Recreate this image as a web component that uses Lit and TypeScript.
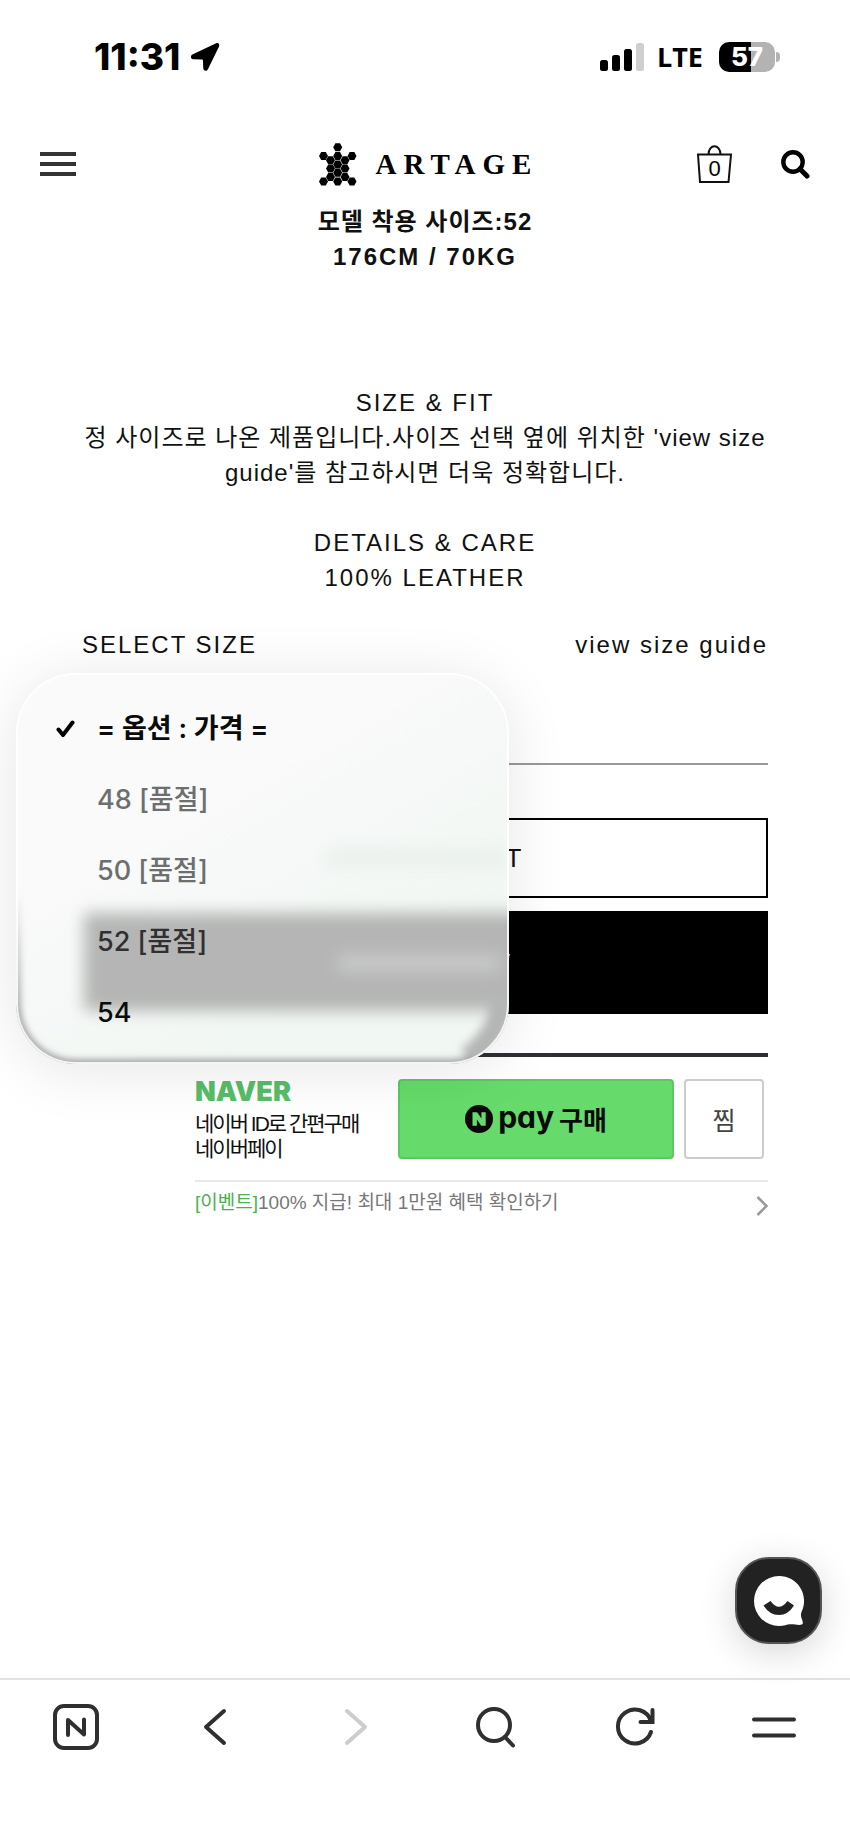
import { LitElement, html, css, svg, nothing } from "lit";
import { customElement, state } from "lit/decorators.js";

interface SizeOption {
  label: string;
  soldOut: boolean;
}

const OPTIONS: SizeOption[] = [
  { label: "= 옵션 : 가격 =", soldOut: false },
  { label: "48 [품절]", soldOut: true },
  { label: "50 [품절]", soldOut: true },
  { label: "52 [품절]", soldOut: true },
  { label: "54", soldOut: false },
];

// Centres of the hexagon cells that make up the turtle mark.
const CELLS: [number, number][] = [
  [18.7, 4.3],
  [4.5, 13], [18.7, 13], [33, 13],
  [11.5, 17.2], [26, 17.2],
  [18.7, 21.4],
  [11.5, 25.6], [26, 25.6],
  [18.7, 29.8],
  [11.5, 34], [26, 34],
  [4.5, 38.4], [18.7, 38.4], [33, 38.4],
];

const hexagon = ([x, y]: [number, number]) =>
  svg`<path d="M${x - 4.5} ${y}l2.2-4h4.600l2.200 4l-2.200 4h-4.600z" />`;

@customElement("status-bar")
export class StatusBar extends LitElement {
  static styles = css`
    :host {
      display: flex;
      align-items: center;
      justify-content: space-between;
      height: 114px;
      padding: 0 70px 0 94px;
      box-sizing: border-box;
      font-family: Inter, "Noto Sans CJK KR", sans-serif;
      color: #000;
    }
    .side {
      display: flex;
      align-items: center;
    }
    .time {
      font-size: 37px;
      line-height: 40px;
      font-weight: 800;
      margin-right: 10px;
    }
    .network {
      font: 700 27px/32px "Open Sans", sans-serif;
      margin: 0 16px 0 13px;
    }
    .battery {
      position: relative;
      display: flex;
      align-items: center;
    }
    .cell {
      width: 56px;
      height: 30px;
      border-radius: 10px;
      background: linear-gradient(90deg, #000 57%, #b3b3b3 57%);
      color: #fff;
      font-size: 26px;
      line-height: 30px;
      font-weight: 800;
      text-align: center;
    }
    .nub {
      width: 4px;
      height: 10px;
      margin-left: 1px;
      border-radius: 0 4px 4px 0;
      background: #b3b3b3;
    }
    svg {
      display: block;
    }
  `;

  render() {
    return html`
      <div class="side">
        <span class="time">11:31</span>
        <svg width="30" height="30" viewBox="0 0 31 30" aria-hidden="true">
          <path
            d="M27 .8L2.400 12.400C.2 13.600.6 17 3.200 17.200L12.500 17.600Q13.400 17.700 13.400 18.600L13.700 26.700C13.800 29.600 17.200 30.100 18.400 27.800L30 4.200C31 1.800 29.200-.1 27 .8z"
          />
        </svg>
      </div>
      <div class="side">
        <svg width="44" height="28" viewBox="0 0 44 28" aria-hidden="true">
          <rect x="0" y="17" width="8" height="11" rx="2.500" />
          <rect x="12" y="12" width="8" height="16" rx="2.500" />
          <rect x="24" y="6" width="8" height="22" rx="2.500" />
          <rect x="36" y="0" width="8" height="28" rx="2.500" fill="#cfcfcf" />
        </svg>
        <span class="network">LTE</span>
        <span class="battery"
          ><span class="cell">57</span><span class="nub"></span
        ></span>
      </div>
    `;
  }
}

@customElement("shop-header")
export class ShopHeader extends LitElement {
  static styles = css`
    :host {
      display: grid;
      grid-template-columns: 1fr auto 1fr;
      align-items: center;
      height: 90px;
      padding: 10px 40px 0;
      box-sizing: border-box;
    }
    button,
    a {
      display: block;
      padding: 0;
      border: 0;
      background: none;
      color: #000;
      text-decoration: none;
      cursor: pointer;
    }
    .brand {
      display: flex;
      align-items: center;
      gap: 19px;
    }
    .name {
      font: 700 29px/32px "Liberation Serif", serif;
      letter-spacing: 7px;
      margin-right: -7px;
    }
    .tools {
      display: flex;
      align-items: center;
      justify-content: flex-end;
      gap: 49px;
    }
    .bag {
      position: relative;
    }
    .count {
      position: absolute;
      inset: 11px 0 0;
      font: 400 22px/26px "Liberation Sans", sans-serif;
      text-align: center;
    }
    svg {
      display: block;
    }
  `;

  render() {
    return html`
      <button aria-label="메뉴">
        <svg width="36" height="26" viewBox="0 0 36 26" fill="#333">
          <path d="M0 1h36v4H0zM0 11h36v4H0zM0 21h36v4H0z" />
        </svg>
      </button>
      <a class="brand" href="#">
        <svg width="38" height="43" viewBox="0 0 38 43" aria-hidden="true">
          ${CELLS.map(hexagon)}
        </svg>
        <span class="name">ARTAGE</span>
      </a>
      <div class="tools">
        <a class="bag" href="#cart" aria-label="장바구니">
          <svg width="35" height="38" viewBox="0 0 35 38" fill="none" stroke="#111" stroke-width="2">
            <path d="M1 9.500h33l-2.500 27.500h-28.500z" />
            <path d="M11.500 9.500c0-11 12-11 12 0" />
          </svg>
          <span class="count">0</span>
        </a>
        <button aria-label="검색">
          <svg width="29" height="29" viewBox="0 0 29 29" fill="none" stroke="#000">
            <circle cx="12" cy="12" r="9.700" stroke-width="4.400" />
            <path d="M19 19l7 7" stroke-width="5" stroke-linecap="round" />
          </svg>
        </button>
      </div>
    `;
  }
}

@customElement("size-picker")
export class SizePicker extends LitElement {
  @state() private selected = 0;
  @state() private open = true;

  static styles = css`
    :host {
      display: block;
      position: relative;
    }
    .field {
      display: block;
      width: 100%;
      height: 92px;
      padding: 0 10px;
      border: 0;
      border-bottom: 2px solid #999;
      border-radius: 0;
      background: transparent;
      color: #555;
      appearance: none;
      font: 400 24px/32px "Liberation Sans", "Noto Sans CJK KR", sans-serif;
    }
    .popup {
      position: absolute;
      z-index: 2;
      top: 0;
      left: -66px;
      width: 493px;
      padding: 20px 0 16px;
      box-sizing: border-box;
      border-radius: 60px;
      overflow: hidden;
      background: linear-gradient(150deg, #fafafa 30%, #f1f7f3 75%);
    }
    .halo {
      position: absolute;
      top: 0;
      left: -66px;
      width: 493px;
      height: 391px;
      border-radius: 60px;
      box-shadow: 0 6px 60px rgba(0, 0, 0, 0.1);
    }
    .rim {
      position: absolute;
      inset: 0;
      width: 100%;
      height: 100%;
      pointer-events: none;
    }
    .option {
      position: relative;
      display: grid;
      grid-template-columns: 19px 1fr;
      column-gap: 22px;
      align-items: center;
      width: 100%;
      height: 71px;
      padding: 0 40px;
      border: 0;
      background: none;
      color: #0b0b0b;
      text-align: left;
      font: 500 27px/36px Inter, "Noto Sans CJK KR", sans-serif;
    }
    .option:disabled {
      color: #6d6f6e;
    }
    .option.shaded:disabled {
      color: #303030;
    }
    .option.chosen {
      font-weight: 600;
    }
    .label {
      grid-column: 2;
    }
    svg {
      display: block;
    }
  `;

  private pick(index: number) {
    this.selected = index;
    this.open = false;
  }

  render() {
    return html`
      <select
        class="field"
        id="size"
        aria-label="SELECT SIZE"
        @mousedown=${(e: Event) => {
          e.preventDefault();
          this.open = !this.open;
        }}
      >
        ${OPTIONS.map(
          (o, i) =>
            html`<option ?disabled=${o.soldOut} ?selected=${i === this.selected}>
              ${o.label}
            </option>`
        )}
      </select>
      ${this.open ? this.renderPopup() : nothing}
    `;
  }

  private renderPopup() {
    return html`
      <div class="halo"></div>
      <div class="popup" role="listbox" aria-label="SELECT SIZE">
        <svg class="rim" viewBox="0 0 493 391" fill="none" aria-hidden="true">
          <defs>
            <filter id="glass" x="-20%" y="-100%" width="140%" height="300%">
              <feGaussianBlur stdDeviation="8" />
            </filter>
            <filter id="soft" x="-50%" y="-20%" width="200%" height="140%">
              <feGaussianBlur stdDeviation="5" />
            </filter>
            <filter id="fine" x="-20%" y="-20%" width="140%" height="140%">
              <feGaussianBlur stdDeviation="3" />
            </filter>
            <linearGradient id="fade" x1="0" y1="220" x2="0" y2="340" gradientUnits="userSpaceOnUse">
              <stop offset="0" stop-color="#9a9a9a" stop-opacity="0" />
              <stop offset="1" stop-color="#9a9a9a" stop-opacity=".85" />
            </linearGradient>
          </defs>
          <g filter="url(#glass)">
            <rect x="310" y="176" width="180" height="18" fill="#eaf0ec" />
          </g>
          <g filter="url(#glass)">
            <rect x="68" y="240" width="460" height="98" fill="#b4b5b4" />
          </g>
          <g filter="url(#glass)">
            <rect x="322" y="282" width="162" height="16" fill="#c9cbca" />
          </g>
          <path
            d="M486 325C486 350 474 370 452 386"
            stroke="#b4b6b5" stroke-width="24" filter="url(#soft)"
          />
          <path
            d="M0 225V331A60 60 0 0 0 60 391H433Q446 391 458 386"
            stroke="url(#fade)" stroke-width="10" filter="url(#fine)"
          />
          <rect x="1" y="1" width="491" height="389" rx="59" stroke="#fff" stroke-opacity=".85" stroke-width="2" />
        </svg>
        ${OPTIONS.map(
          (o, i) => html`<button
            class="option ${i === this.selected ? "chosen" : ""} ${i === 3 ? "shaded" : ""}"
            role="option"
            aria-selected=${i === this.selected}
            ?disabled=${o.soldOut}
            @click=${() => this.pick(i)}
          >
            ${i === this.selected
              ? html`<svg width="19" height="18" viewBox="0 0 19 18" fill="none" stroke="#000" stroke-width="4" stroke-linecap="round" stroke-linejoin="round" aria-hidden="true">
                  <path d="M2.500 9.500l4.500 5.500l9.500-12.500" />
                </svg>`
              : nothing}
            <span class="label">${o.label}</span>
          </button>`
        )}
      </div>
    `;
  }
}

@customElement("naver-pay")
export class NaverPay extends LitElement {
  static styles = css`
    :host {
      display: block;
      margin: 39px 0 0 113px;
      border-top: 4px solid #2e3036;
      font-family: "Liberation Sans", "Noto Sans CJK KR", sans-serif;
    }
    .row {
      display: grid;
      grid-template-columns: 1fr 276px 80px;
      column-gap: 10px;
      padding: 22px 4px 21px 0;
      border-bottom: 2px solid #e9e9e9;
    }
    .about {
      height: 80px;
      white-space: nowrap;
      font-size: 21px;
      line-height: 25px;
      letter-spacing: -2px;
      color: #111;
    }
    .logo {
      display: block;
      margin-bottom: 6px;
      font: 900 27px/26px Inter, sans-serif;
      letter-spacing: normal;
      color: #58bd68;
    }
    .line {
      display: block;
    }
    button {
      height: 80px;
      padding: 0;
      border-radius: 4px;
      font-family: inherit;
      cursor: pointer;
    }
    .buy {
      display: flex;
      align-items: center;
      justify-content: center;
      border: 2px solid #5cc763;
      background: #66db6b;
      color: #0a0a0a;
    }
    .pay {
      margin: 0 5px 4px 5px;
      font: 700 30px/36px Inter, sans-serif;
      font-feature-settings: "cv11";
    }
    .verb {
      font: 700 26px/36px "Noto Sans CJK KR", sans-serif;
    }
    .wish {
      border: 2px solid #ccc;
      background: #fff;
      color: #444;
      font-size: 25px;
    }
    .event {
      display: flex;
      align-items: center;
      justify-content: space-between;
      height: 42px;
      font-size: 19px;
      line-height: 28px;
      color: #777;
      text-decoration: none;
    }
    .tag {
      color: #4bb050;
    }
    .chevron {
      margin-top: 6px;
    }
    svg {
      display: block;
    }
  `;

  render() {
    return html`
      <div class="row">
        <div class="about">
          <span class="logo">NAVER</span>
          <span class="line">네이버 ID로 간편구매</span>
          <span class="line">네이버페이</span>
        </div>
        <button class="buy">
          <svg width="28" height="28" viewBox="0 0 28 28" aria-hidden="true">
            <circle cx="14" cy="14" r="14" fill="#0a0a0a" />
            <path d="M7.500 7.200h4.600l4.300 6.200V7.200h4.300v13.600h-4.500l-4.300-6.200v6.200H7.500z" fill="#66db6b" />
          </svg>
          <span class="pay">pay</span>
          <span class="verb">구매</span>
        </button>
        <button class="wish">찜</button>
      </div>
      <a class="event" href="#event">
        <span><span class="tag">[이벤트]</span>100% 지급! 최대 1만원 혜택 확인하기</span>
        <svg class="chevron" width="12" height="20" viewBox="0 0 12 20" fill="none" stroke="#999" stroke-width="2.500" aria-hidden="true">
          <path d="M1.500 1l9 9l-9 9" />
        </svg>
      </a>
    `;
  }
}

@customElement("browser-bar")
export class BrowserBar extends LitElement {
  static styles = css`
    :host {
      display: flex;
      height: 164px;
      padding: 0 6px;
      box-sizing: border-box;
      border-top: 2px solid #e2e2e2;
      background: #fff;
    }
    button {
      flex: 1;
      display: flex;
      justify-content: center;
      height: 94px;
      padding: 0;
      border: 0;
      background: none;
      align-items: center;
    }
    svg {
      display: block;
      fill: none;
      stroke: #2f2f2f;
      stroke-width: 4px;
      stroke-linecap: round;
      stroke-linejoin: round;
    }
    button:disabled svg {
      stroke: #ccc;
    }
  `;

  render() {
    return html`
      <button aria-label="네이버 홈">
        <svg width="46" height="46" viewBox="0 0 46 46">
          <rect x="2" y="2" width="42" height="42" rx="9" />
          <path d="M15 31V16L31 30.500V15.500" />
        </svg>
      </button>
      <button aria-label="뒤로">
        <svg width="46" height="46" viewBox="0 0 46 46"><path d="M31 7L13 23L31 39" /></svg>
      </button>
      <button aria-label="앞으로" disabled>
        <svg width="46" height="46" viewBox="0 0 46 46"><path d="M15 7L33 23L15 39" /></svg>
      </button>
      <button aria-label="검색">
        <svg width="46" height="46" viewBox="0 0 46 46">
          <circle cx="22" cy="21" r="16" />
          <path d="M33 33L41 41.500" />
        </svg>
      </button>
      <button aria-label="새로고침">
        <svg width="46" height="46" viewBox="0 0 46 46">
          <path d="M39 28A17 17 0 1 1 39 17" />
          <path d="M40.500 6V18H28.500" stroke-linejoin="miter" />
        </svg>
      </button>
      <button aria-label="메뉴">
        <svg width="46" height="46" viewBox="0 0 46 46"><path d="M3 15.500H43M3 31.500H43" /></svg>
      </button>
    `;
  }
}

@customElement("app-root")
export class AppRoot extends LitElement {
  static styles = css`
    :host {
      display: flex;
      flex-direction: column;
      min-height: 100vh;
      position: relative;
      background: #fff;
      color: #111;
      font-family: "Liberation Sans", "Noto Sans CJK KR", sans-serif;
      font-size: 24px;
      line-height: 35px;
      letter-spacing: 2px;
    }
    status-bar,
    shop-header,
    size-picker,
    naver-pay {
      letter-spacing: normal;
    }
    main {
      flex: 1;
      padding: 0 82px;
    }
    p {
      margin: 0;
      text-align: center;
      word-break: keep-all;
    }
    .korean {
      letter-spacing: 1px;
    }
    .model {
      font-weight: 700;
      margin-bottom: 111px;
    }
    .fit {
      margin-bottom: 35px;
    }
    .label-row {
      display: flex;
      justify-content: space-between;
      margin: 32px 0 11px;
    }
    a {
      color: inherit;
      text-decoration: none;
    }
    .action {
      display: block;
      width: 100%;
      border: 2px solid #000;
      border-radius: 0;
      padding: 0;
      font: 400 26px/32px "Liberation Sans", sans-serif;
      letter-spacing: 2px;
    }
    .cart {
      height: 80px;
      margin-top: 53px;
      background: #fff;
      color: #111;
    }
    .now {
      height: 103px;
      margin-top: 13px;
      background: #000;
      color: #fff;
    }
    .chat {
      position: absolute;
      right: 28px;
      bottom: 198px;
      width: 87px;
      height: 87px;
      padding: 0;
      border: 2px solid #555;
      border-radius: 34px;
      background: #222;
      box-shadow: 0 8px 36px rgba(0, 0, 0, 0.16);
    }
    .chat svg {
      display: block;
      margin: 0 auto;
    }
  `;

  render() {
    return html`
      <status-bar></status-bar>
      <shop-header></shop-header>
      <main>
        <p class="model"><span class="korean">모델 착용 사이즈:52</span><br />176CM / 70KG</p>
        <p class="fit">
          SIZE &amp; FIT<br /><span class="korean"
            >정 사이즈로 나온 제품입니다.사이즈 선택 옆에 위치한 'view size
            guide'를 참고하시면 더욱 정확합니다.</span
          >
        </p>
        <p>DETAILS &amp; CARE<br />100% LEATHER</p>
        <div class="label-row">
          <span>SELECT SIZE</span>
          <a href="#guide">view size guide</a>
        </div>
        <size-picker></size-picker>
        <button class="action cart">ADD TO CART</button>
        <button class="action now">BUY IT NOW</button>
        <naver-pay></naver-pay>
      </main>
      <button class="chat" aria-label="채팅 상담">
        <svg width="50" height="50" viewBox="0 0 50 50">
          <path
            d="M25 0A25 25 0 1 0 25 50C30 50 33 48.400 36 48.200C40 48 43 49.200 47 48.800C49.500 48.500 49 46 48.200 44C46.900 41 46.600 38.500 47.500 36A25 25 0 0 0 25 0z"
            fill="#fff"
          />
          <path
            d="M9.500 29.500L16.500 25Q25 36.500 33.500 25L40 29.500Q34 39 25 39Q15.500 39 9.500 29.500z"
            fill="#222"
          />
        </svg>
      </button>
      <browser-bar></browser-bar>
    `;
  }
}
